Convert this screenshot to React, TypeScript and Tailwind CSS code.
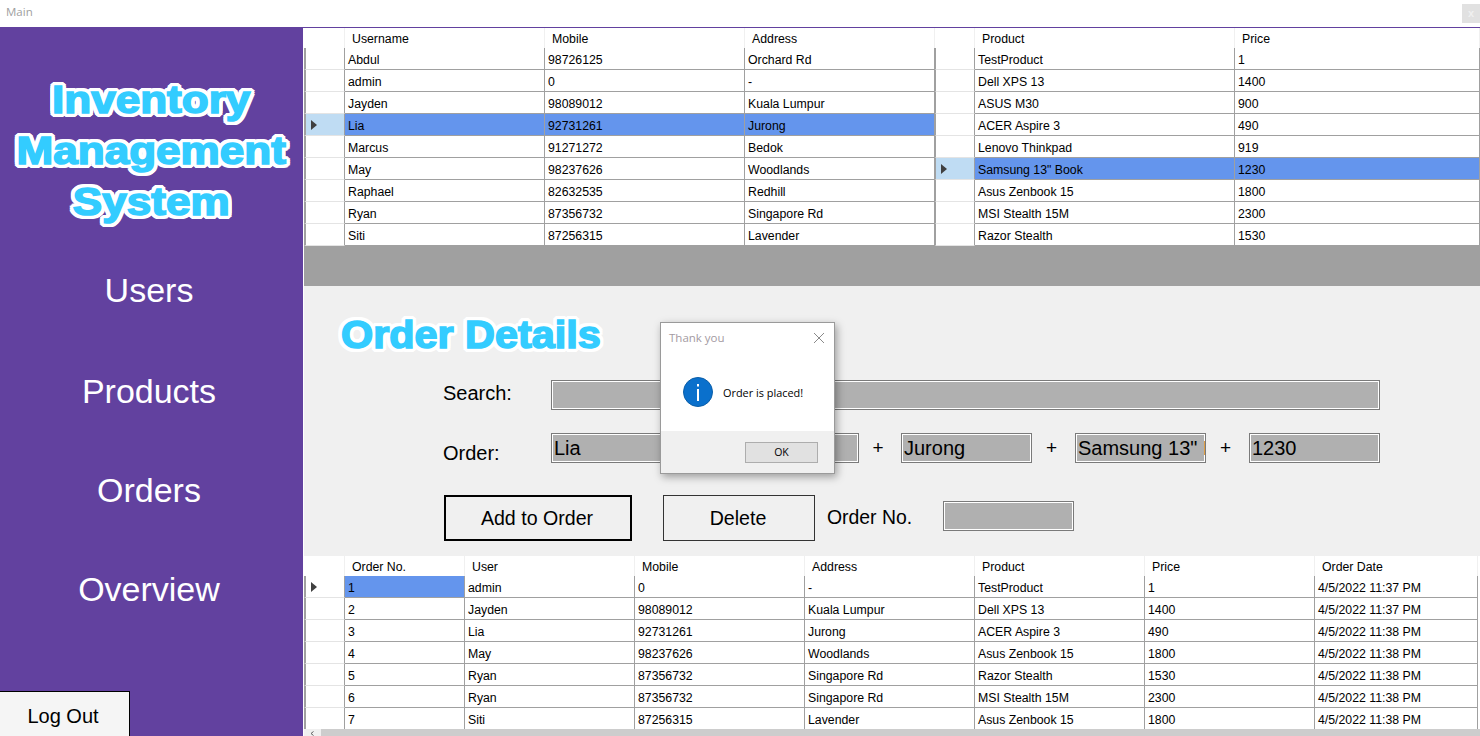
const outline =
    '[text-shadow:4px_0_0_#fff,-4px_0_0_#fff,0_4px_0_#fff,0_-4px_0_#fff,3px_3px_0_#fff,-3px_3px_0_#fff,3px_-3px_0_#fff,-3px_-3px_0_#fff,4px_2px_0_#fff,-4px_2px_0_#fff,4px_-2px_0_#fff,-4px_-2px_0_#fff,2px_4px_0_#fff,-2px_4px_0_#fff,2px_-4px_0_#fff,-2px_-4px_0_#fff]';

type Grid = {
    columns: { name: string; width: string }[];
    rows: string[][];
    selected: number;
    selectedCells: number[];
    headerHighlight: boolean;
};

const usersGrid: Grid = {
    columns: [
        { name: 'Username', width: 'w-[200px]' },
        { name: 'Mobile', width: 'w-[200px]' },
        { name: 'Address', width: 'w-[190px]' },
    ],
    rows: [
        ['Abdul', '98726125', 'Orchard Rd'],
        ['admin', '0', '-'],
        ['Jayden', '98089012', 'Kuala Lumpur'],
        ['Lia', '92731261', 'Jurong'],
        ['Marcus', '91271272', 'Bedok'],
        ['May', '98237626', 'Woodlands'],
        ['Raphael', '82632535', 'Redhill'],
        ['Ryan', '87356732', 'Singapore Rd'],
        ['Siti', '87256315', 'Lavender'],
    ],
    selected: 3,
    selectedCells: [0, 1, 2],
    headerHighlight: true,
};

const productsGrid: Grid = {
    columns: [
        { name: 'Product', width: 'w-[260px]' },
        { name: 'Price', width: 'w-[245px]' },
    ],
    rows: [
        ['TestProduct', '1'],
        ['Dell XPS 13', '1400'],
        ['ASUS M30', '900'],
        ['ACER Aspire 3', '490'],
        ['Lenovo Thinkpad', '919'],
        ['Samsung 13" Book', '1230'],
        ['Asus Zenbook 15', '1800'],
        ['MSI Stealth 15M', '2300'],
        ['Razor Stealth', '1530'],
    ],
    selected: 5,
    selectedCells: [0, 1],
    headerHighlight: true,
};

const ordersGrid: Grid = {
    columns: [
        { name: 'Order No.', width: 'w-[120px]' },
        { name: 'User', width: 'w-[170px]' },
        { name: 'Mobile', width: 'w-[170px]' },
        { name: 'Address', width: 'w-[170px]' },
        { name: 'Product', width: 'w-[170px]' },
        { name: 'Price', width: 'w-[170px]' },
        { name: 'Order Date', width: 'w-[163px]' },
    ],
    rows: [
        ['1', 'admin', '0', '-', 'TestProduct', '1', '4/5/2022 11:37 PM'],
        ['2', 'Jayden', '98089012', 'Kuala Lumpur', 'Dell XPS 13', '1400', '4/5/2022 11:37 PM'],
        ['3', 'Lia', '92731261', 'Jurong', 'ACER Aspire 3', '490', '4/5/2022 11:38 PM'],
        ['4', 'May', '98237626', 'Woodlands', 'Asus Zenbook 15', '1800', '4/5/2022 11:38 PM'],
        ['5', 'Ryan', '87356732', 'Singapore Rd', 'Razor Stealth', '1530', '4/5/2022 11:38 PM'],
        ['6', 'Ryan', '87356732', 'Singapore Rd', 'MSI Stealth 15M', '2300', '4/5/2022 11:38 PM'],
        ['7', 'Siti', '87256315', 'Lavender', 'Asus Zenbook 15', '1800', '4/5/2022 11:38 PM'],
    ],
    selected: 0,
    selectedCells: [0],
    headerHighlight: false,
};

const DataGrid = ({ grid, headerWidth, rowHeader }: { grid: Grid; headerWidth: string; rowHeader: string }) => (
    <div className="bg-white text-[12.3px] leading-[22px] text-black">
        <div className="flex h-5">
            <div className={`${headerWidth} shrink-0 border-r border-[#f0f0f0]`} />
            {grid.columns.map((col, index) => (
                <div key={index} className={`${col.width} shrink-0 border-r border-[#f0f0f0] pl-[7px] leading-[23px]`}>
                    {col.name}
                </div>
            ))}
        </div>
        {grid.rows.map((row, rowIndex) => (
            <div key={rowIndex} className="flex h-[22px]">
                <div
                    className={`${headerWidth} ${rowHeader} flex shrink-0 items-center border-r border-b border-r-[#a0a0a0] border-b-[#e4e4e4] border-l-[#a0a0a0] ${
                        rowIndex === grid.selected && grid.headerHighlight ? 'bg-[#bfdcf3]' : 'bg-white'
                    }`}
                >
                    {rowIndex === grid.selected && (
                        <svg width="6" height="10" viewBox="0 0 6 10">
                            <polygon points="0,0 6,5 0,10" fill="#404040" />
                        </svg>
                    )}
                </div>
                {row.map((cell, cellIndex) => (
                    <div
                        key={cellIndex}
                        className={`${grid.columns[cellIndex].width} shrink-0 overflow-hidden border-r border-b border-[#a0a0a0] pt-px pl-[3px] whitespace-nowrap ${
                            rowIndex === grid.selected && grid.selectedCells.includes(cellIndex) ? 'bg-[#6495ed]' : ''
                        }`}
                    >
                        {cell}
                    </div>
                ))}
            </div>
        ))}
    </div>
);

const GrayInput = ({ value, width }: { value?: string; width: string }) => (
    <div
        className={`${width} h-[30px] shrink-0 overflow-hidden border border-[#7a7a7a] bg-[#b0b0b0] pl-[2px] text-[20px] leading-[28px] whitespace-nowrap text-black shadow-[inset_0_0_0_1px_#ffffff]`}
    >
        {value}
    </div>
);

const Plus = ({ width }: { width: string }) => (
    <div className={`${width} flex shrink-0 justify-center pr-1 text-[19px] leading-[30px]`}>+</div>
);

const App = () => {
    return (
        <div className="relative h-[736px] w-[1480px] overflow-hidden bg-white font-['Liberation_Sans',sans-serif] text-black">
            <div className="flex h-7 border-b border-[#62419f]">
                <div className="flex-1 pl-[6px] font-['Open_Sans',sans-serif] text-[11.5px] leading-[23px] text-[#a0a0a0]">Main</div>
                <div className="mt-1 flex h-[19px] w-[18px] items-center justify-center bg-[#e1e1e1] text-[11px] leading-none font-bold text-[#f0f0f0]">
                    x
                </div>
            </div>

            <div className="flex h-[708px]">
                <aside className="relative flex w-[304px] shrink-0 flex-col items-center border-r border-white bg-[#62419f]">
                    <div
                        className={`mt-[46px] scale-x-[1.13] text-center text-[39px] leading-[51px] font-bold text-[#33ccff] [-webkit-text-stroke:1.6px_#33ccff] ${outline}`}
                    >
                        <div>Inventory</div>
                        <div>Management</div>
                        <div>System</div>
                    </div>
                    <nav className="mt-[43px] mr-[5px] flex flex-col items-center text-[34px] leading-[40px] text-white">
                        <div>Users</div>
                        <div className="mt-[61px]">Products</div>
                        <div className="mt-[59px]">Orders</div>
                        <div className="mt-[59px]">Overview</div>
                    </nav>
                    <button className="absolute bottom-0 left-0 h-[45px] w-[130px] border-t border-r border-black bg-[#f5f5f5] pt-1 pr-[3px] text-[20px]">
                        Log Out
                    </button>
                </aside>

                <main className="min-w-0 flex-1">
                    <div className="flex h-[218px]">
                        <DataGrid grid={usersGrid} headerWidth="w-[41px]" rowHeader="border-l-2 pl-[5px]" />
                        <DataGrid grid={productsGrid} headerWidth="w-[40px]" rowHeader="border-l pl-[5px]" />
                    </div>
                    <div className="h-10 bg-[#a0a0a0]" />

                    <section className="h-[270px] bg-[#f0f0f0] pt-[27px]">
                        <h2
                            className={`ml-[37px] h-[45px] origin-left scale-x-[1.06] text-[39px] leading-[44px] font-bold text-[#33ccff] [-webkit-text-stroke:1.6px_#33ccff] ${outline}`}
                        >
                            Order Details
                        </h2>
                        <div className="mt-[22px] ml-[139px] flex text-[20px] leading-[26px]">
                            <div className="w-[108px] shrink-0">Search:</div>
                            <GrayInput width="w-[829px]" />
                        </div>
                        <div className="mt-[23px] ml-[139px] flex text-[20px] leading-[40px]">
                            <div className="w-[108px] shrink-0">Order:</div>
                            <GrayInput width="w-[130px]" value="Lia" />
                            <Plus width="w-[48px]" />
                            <GrayInput width="w-[130px]" value="92731261" />
                            <Plus width="w-[42px]" />
                            <GrayInput width="w-[131px]" value="Jurong" />
                            <Plus width="w-[43px]" />
                            <GrayInput width="w-[131px]" value='Samsung 13" Book' />
                            <Plus width="w-[43px]" />
                            <GrayInput width="w-[131px]" value="1230" />
                        </div>
                        <div className="mt-[22px] ml-[140px] flex items-center text-[19.6px]">
                            <button className="h-[46px] w-[188px] border-2 border-black pt-px pr-[2px]">Add to Order</button>
                            <button className="ml-[31px] h-[46px] w-[152px] border border-[#333333] pt-px pr-[2px]">Delete</button>
                            <div className="ml-3 w-[116px] text-[19.4px]">Order No.</div>
                            <div className="self-start pt-[6px]">
                                <GrayInput width="w-[131px]" />
                            </div>
                        </div>
                    </section>

                    <div className="relative h-[180px] overflow-hidden bg-[#f0f0f0]">
                        <DataGrid grid={ordersGrid} headerWidth="w-[41px]" rowHeader="border-l-2 pl-[5px]" />
                        <div className="absolute right-0 bottom-0 left-0 flex h-[7px] bg-[#f0f0f0]">
                            <div className="flex w-[17px] items-start justify-center pt-[2px]">
                                <svg width="5" height="5" viewBox="0 0 5 5" fill="none" stroke="#606060" strokeWidth="1">
                                    <path d="M3.5 0.5L1 2.5l2.5 2" />
                                </svg>
                            </div>
                            <div className="flex-1 bg-[#cdcdcd]" />
                        </div>
                    </div>
                </main>
            </div>

            <div className="absolute top-[322px] left-[660px] flex h-[152px] w-[175px] flex-col border border-[#9a9a9a] bg-white font-['Open_Sans',sans-serif] shadow-[2px_3px_8px_rgba(0,0,0,0.35)]">
                <div className="flex h-[30px] items-center justify-between pr-[9px] pl-2 text-[11.5px] text-[#a39aa2]">
                    <span>Thank you</span>
                    <svg width="12" height="12" viewBox="0 0 12 12" stroke="#8a8a8a" strokeWidth="1">
                        <path d="M1 1l10 10M11 1L1 11" />
                    </svg>
                </div>
                <div className="flex h-[78px] items-center pl-[22px]">
                    <svg width="30" height="30" viewBox="0 0 30 30">
                        <circle cx="15" cy="15" r="14.5" fill="#0a70cc" stroke="#0b5ea8" />
                        <rect x="14" y="12" width="2" height="12" fill="#fff" />
                        <rect x="14" y="7" width="2" height="2.5" fill="#fff" />
                    </svg>
                    <span className="ml-[10px] pt-[3px] text-[10.9px] text-black">Order is placed!</span>
                </div>
                <div className="flex flex-1 items-start justify-end bg-[#f0f0f0] pt-[11px] pr-4">
                    <button className="h-[21px] w-[73px] border border-[#adadad] bg-[#e1e1e1] text-[10.5px]">OK</button>
                </div>
            </div>
        </div>
    );
};

export default App;
